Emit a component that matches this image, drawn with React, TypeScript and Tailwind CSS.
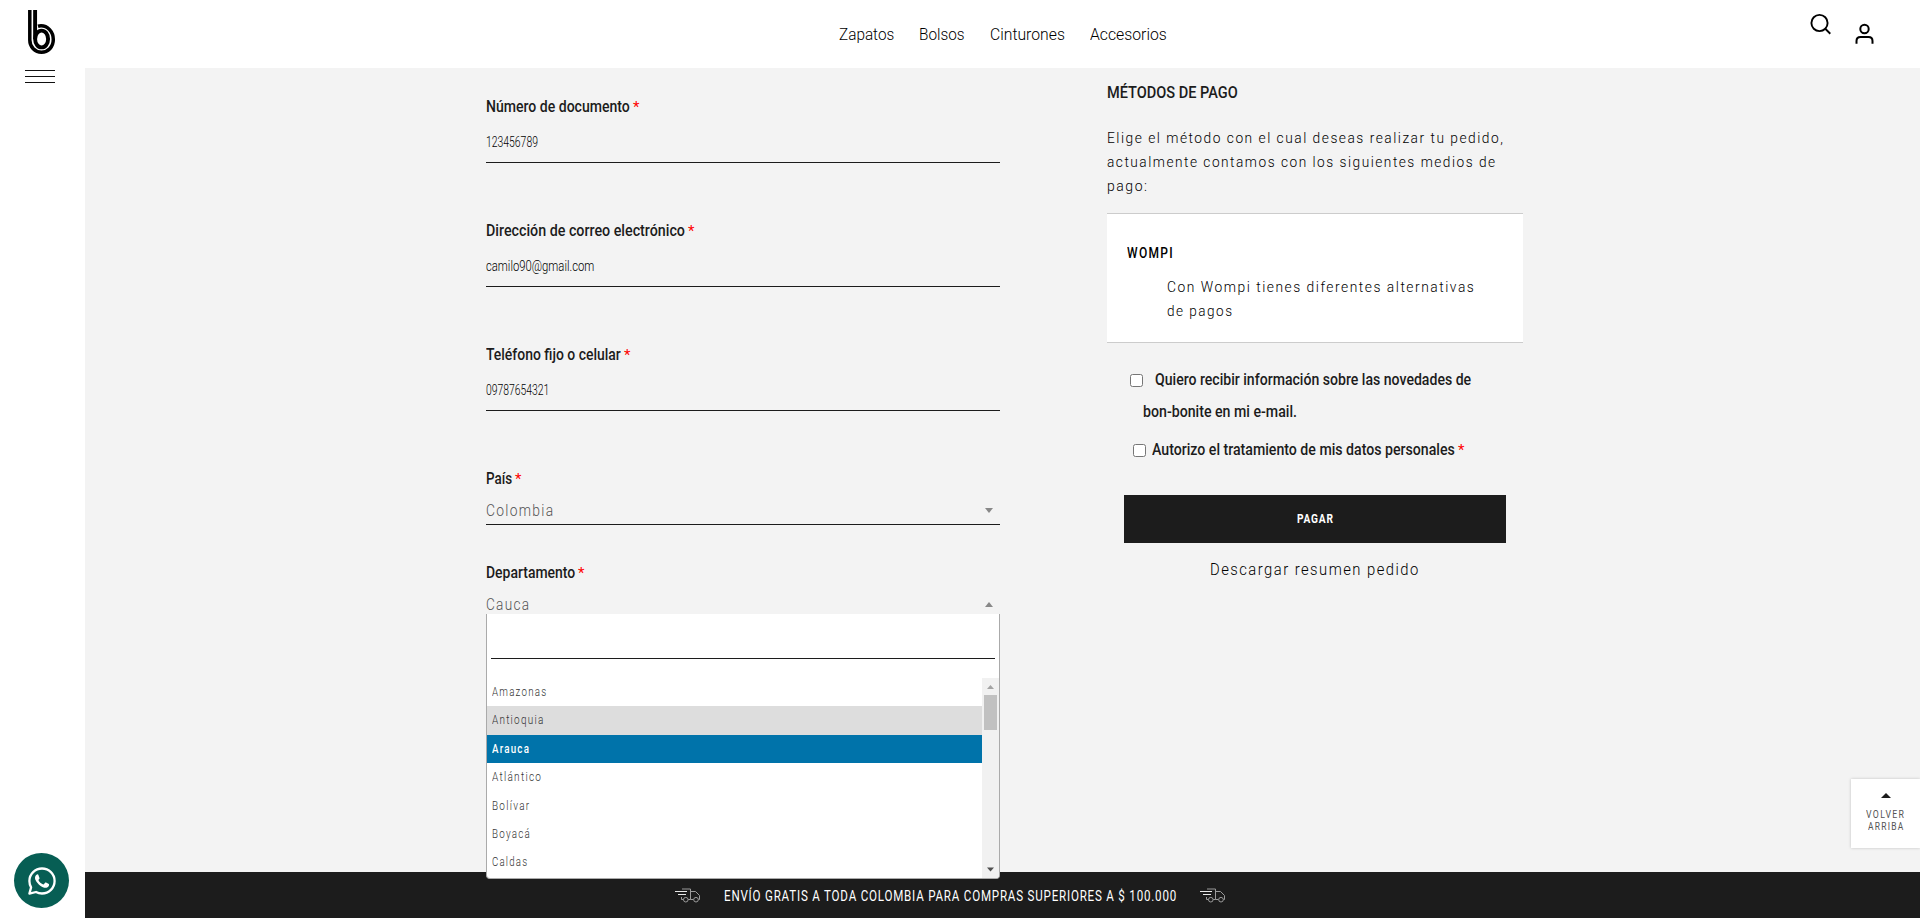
import { useLayoutEffect, useRef, useState } from "react";
import type { ReactNode } from "react";

/** One line of text condensed horizontally to the width its class gives it. */
function Fit({ className, children }: { className: string; children: ReactNode }) {
  const outer = useRef<HTMLSpanElement>(null);
  const inner = useRef<HTMLSpanElement>(null);
  const [scale, setScale] = useState(1);
  useLayoutEffect(() => {
    if (!outer.current || !inner.current) return;
    const spacing = parseFloat(getComputedStyle(inner.current).letterSpacing) || 0;
    const natural = inner.current.offsetWidth - spacing;
    if (natural > 0) setScale(outer.current.offsetWidth / natural);
  }, []);
  return (
    <span ref={outer} className={`block shrink-0 whitespace-nowrap ${className}`}>
      <span ref={inner} className="inline-block origin-left align-top" style={{ transform: `scaleX(${scale})` }}>
        {children}
      </span>
    </span>
  );
}

function Label({ w, children }: { w: string; children: ReactNode }) {
  return (
    <div className="flex h-5 gap-[3px] text-[16px] font-medium leading-5">
      <Fit className={w}>{children}</Fit>
      <span className="text-[15px] font-normal text-[#ff0000]">*</span>
    </div>
  );
}

function Field({ label, lw, value, vw }: { label: string; lw: string; value: string; vw: string }) {
  return (
    <div className="mb-[58px]">
      <Label w={lw}>{label}</Label>
      <div className="h-[46px] border-b border-[#1c1c1c] pt-[15px] text-[14px] font-light leading-5 text-black">
        <Fit className={vw}>{value}</Fit>
      </div>
    </div>
  );
}

function Truck() {
  return (
    <svg className="h-[15px] w-[26px]" viewBox="0 0 26 15" fill="none" stroke="#9a9a9a" strokeWidth="1">
      <path d="M7 1H15.5V11.5H13.2M6.5 9V11.5H8.4M15.500 3.500H20.500L24.500 7.500V11.500H23.600M15.500 11.500H18.400" />
      <circle cx="10.8" cy="11.7" r="2.300" />
      <circle cx="21" cy="11.7" r="2.300" />
      <path d="M0 3.500H12M3 6.500H11" stroke="#e8e8e8" />
    </svg>
  );
}

const options = [
  { name: "Amazonas", w: "w-[54px]", row: "text-[#333]" },
  { name: "Antioquia", w: "w-[51px]", row: "bg-[#ddd] text-[#333]" },
  { name: "Arauca", w: "w-[37px]", row: "bg-[#0073aa] text-white font-medium" },
  { name: "Atlántico", w: "w-[49px]", row: "text-[#333]" },
  { name: "Bolívar", w: "w-[37px]", row: "text-[#333]" },
  { name: "Boyacá", w: "w-[38px]", row: "text-[#333]" },
  { name: "Caldas", w: "w-[35px]", row: "text-[#333]" },
];

function Dropdown() {
  return (
    <div className="absolute left-0 top-[31px] z-10 h-[265px] w-[514px] overflow-hidden rounded-b-[4px] border border-t-0 border-[#aaa] bg-white">
      <div className="mx-1 h-[45px] border-b border-[#1c1c1c]" />
      <div className="mt-[19px] flex h-[200px]">
        <div className="flex-1">
          {options.map((o) => (
            <div key={o.name} className={`h-[28.4px] pl-[5px] text-[12px] leading-[28px] tracking-[1.5px] ${o.row}`}>
              <Fit className={o.w}>{o.name}</Fit>
            </div>
          ))}
        </div>
        <div className="flex w-[17px] flex-col items-center bg-[#f1f1f1]">
          <svg className="h-[17px] w-[17px]" viewBox="0 0 17 17">
            <path d="M5 11L8.5 7L12 11Z" fill="#a3a3a3" />
          </svg>
          <div className="h-[35px] w-[13px] bg-[#c1c1c1]" />
          <div className="flex-1" />
          <svg className="h-[17px] w-[17px]" viewBox="0 0 17 17">
            <path d="M5 6.5H12L8.5 10.5Z" fill="#505050" />
          </svg>
        </div>
      </div>
    </div>
  );
}

export default function App() {
  return (
    <div className="flex h-[918px] w-[1920px] overflow-hidden bg-white font-['Roboto',sans-serif] text-[#1c1c1c]">
      <aside className="flex w-[85px] shrink-0 flex-col">
        <svg className="ml-[27px] mt-[9px] h-[46px] w-[30px]" viewBox="27 9 30 46" fill="none" stroke="#000">
          <path
            d="M29.8 10V40C29.8 47 35 52.3 41.5 52.3C48 52.3 53.3 47 53.3 39.5C53.3 31.5 47.5 25.8 41 25.8C40 25.8 39 25.9 38 26.2"
            strokeWidth="3.5"
          />
          <path d="M35.1 10V39" strokeWidth="3.9" />
          <ellipse cx="41.6" cy="39" rx="6.5" ry="8.4" strokeWidth="3.9" />
        </svg>
        <div className="ml-[25px] mt-[15px] flex w-[30px] flex-col gap-[5px]">
          <div className="h-px bg-[#111]" />
          <div className="h-px bg-[#111]" />
          <div className="h-px bg-[#111]" />
        </div>
        <div className="mb-[10px] ml-[14px] mt-auto flex size-[55px] items-center justify-center rounded-full bg-[#075e54]">
          <svg className="ml-px size-[28px]" viewBox="0 0 28 28" fill="none">
            <path
              d="M1.4 26.6L3.1 20.4C2 18.5 1.4 16.3 1.4 14C1.4 7 7.1 1.5 14 1.5C21 1.5 26.6 7 26.6 14C26.6 21 21 26.5 14 26.5C11.8 26.5 9.8 26 8 25Z"
              stroke="#fff"
              strokeWidth="2.3"
              strokeLinejoin="round"
            />
            <path
              d="M9.8 7.2C9.3 7.2 8.7 7.4 8.2 8C7.6 8.700 7 9.600 7 10.900C7 12.400 8 14 9.500 15.900C11.500 18.400 13.700 20 16.200 20.700C18.200 21.200 20.500 20.200 20.900 18.700C21.100 17.900 21.100 17.400 20.900 17.100C20.500 16.700 18.500 15.700 17.900 15.500C17.500 15.400 17.200 15.500 16.900 15.900L15.800 17.200C15.500 17.500 15.200 17.500 14.800 17.300C12.900 16.500 11.600 15.200 10.600 13.500C10.400 13.100 10.500 12.900 10.700 12.600C11.200 12 11.800 11.500 11.500 10.900L10.400 7.900C10.200 7.400 10.100 7.200 9.800 7.200Z"
              fill="#fff"
            />
          </svg>
        </div>
      </aside>

      <div className="flex flex-1 flex-col">
        <header className="flex h-[68px] shrink-0">
          <nav className="flex gap-[25px] pl-[753.5px] pt-[24px] text-[17px] font-light leading-5 text-black">
            <Fit className="w-[55px]">Zapatos</Fit>
            <Fit className="w-[46px]">Bolsos</Fit>
            <Fit className="w-[75px]">Cinturones</Fit>
            <Fit className="w-[77px]">Accesorios</Fit>
          </nav>
          <div className="ml-auto mr-[46.5px] flex gap-[24px] pt-[13px]">
            <svg className="h-[22px] w-[21px]" viewBox="1809.5 13 21 22" fill="none" stroke="#000" strokeWidth="1.9">
              <circle cx="1819" cy="23" r="8.1" />
              <path d="M1824.8 28.8L1829.8 33.7" />
            </svg>
            <svg className="mt-[10px] h-[22px] w-[19px]" viewBox="1854.5 23 19 22" fill="none" stroke="#000" strokeWidth="2">
              <circle cx="1864" cy="29" r="4.2" />
              <path d="M1856 43.8V41C1856 38.5 1857.5 37 1860 37H1868C1870.5 37 1872 38.5 1872 41V43.8" />
            </svg>
          </div>
        </header>

        <div className="flex h-[804px] shrink-0 bg-[#f3f3f3] pl-[401px]">
          <section className="w-[514px] pt-[29px]">
            <Field label="Número de documento" lw="w-[144px]" value="123456789" vw="w-[52px]" />
            <Field label="Dirección de correo electrónico" lw="w-[199px]" value="camilo90@gmail.com" vw="w-[108px]" />
            <Field label="Teléfono fijo o celular" lw="w-[135px]" value="09787654321" vw="w-[63px]" />
            <Label w="w-[26px]">País</Label>
            <div className="mb-[38px] flex h-[36px] justify-between border-b border-[#1c1c1c] pr-[7px] pt-[12px] text-[16px] font-light leading-5 tracking-[1.5px] text-[#555]">
              <Fit className="w-[67px]">Colombia</Fit>
              <svg className="mt-[7px] h-[5px] w-[8px]" viewBox="0 0 8 5">
                <path d="M0 0H8L4 5Z" fill="#888" />
              </svg>
            </div>
            <Label w="w-[89px]">Departamento</Label>
            <div className="relative flex h-[36px] justify-between pr-[7px] pt-[12px] text-[16px] font-light leading-5 tracking-[1.5px] text-[#555]">
              <Fit className="w-[43px]">Cauca</Fit>
              <svg className="mt-[7px] h-[5px] w-[8px]" viewBox="0 0 8 5">
                <path d="M0 5H8L4 0Z" fill="#888" />
              </svg>
              <Dropdown />
            </div>
          </section>

          <section className="ml-[107px] w-[416px] pt-[14px]">
            <h2 className="text-[17px] font-medium leading-5">
              <Fit className="w-[131px]">MÉTODOS DE PAGO</Fit>
            </h2>
            <div className="mt-[24px] text-[15.5px] font-light leading-6 tracking-[1.7px] text-black">
              <Fit className="w-[396px]">Elige el método con el cual deseas realizar tu pedido,</Fit>
              <Fit className="w-[388px]">actualmente contamos con los siguientes medios de</Fit>
              <Fit className="w-[40px]">pago:</Fit>
            </div>
            <div className="mt-[15px] h-[130px] border-y border-[#ccc] bg-white pl-5 pt-[27px] text-[15.5px] font-light leading-6 tracking-[1.7px] text-black">
              <div className="font-medium">
                <Fit className="w-[46px]">WOMPI</Fit>
              </div>
              <div className="ml-[39.5px] mt-[10px]">
                <Fit className="w-[307px]">Con Wompi tienes diferentes alternativas</Fit>
                <Fit className="w-[65px]">de pagos</Fit>
              </div>
            </div>
            <div className="ml-[23px] mt-[21px] text-[16px] font-medium leading-8">
              <div className="flex items-center gap-[12px]">
                <span className="size-[13px] rounded-[2.5px] border border-[#767676] bg-white" />
                <Fit className="w-[316px]">Quiero recibir información sobre las novedades de</Fit>
              </div>
              <div className="ml-[13px]">
                <Fit className="w-[154px]">bon-bonite en mi e-mail.</Fit>
              </div>
              <div className="ml-[3px] mt-[6px] flex h-8 items-center gap-[6px]">
                <span className="size-[13px] rounded-[2.5px] border border-[#767676] bg-white" />
                <Label w="w-[303px]">Autorizo el tratamiento de mis datos personales</Label>
              </div>
            </div>
            <div className="ml-[17px] mt-[29px] flex h-[48px] w-[382px] items-center justify-center bg-[#1c1c1c] text-[13px] font-bold tracking-[1px] text-white">
              <Fit className="mr-px w-[36px]">PAGAR</Fit>
            </div>
            <div className="ml-[103px] mt-[16px] text-[17px] font-light leading-5 tracking-[1.7px] text-black">
              <Fit className="w-[208px]">Descargar resumen pedido</Fit>
            </div>
          </section>

          <aside className="ml-auto mt-[711px] flex h-[69px] w-[69px] flex-col items-center bg-white pt-[14px] text-[10px] leading-3 tracking-[1.5px] text-[#555] shadow-[0_0_3px_rgba(0,0,0,0.2)]">
            <svg className="mb-[11px] h-[5px] w-[10px]" viewBox="0 0 10 5">
              <path d="M0 5H10L5 0Z" fill="#1c1c1c" />
            </svg>
            <Fit className="mr-px w-[38px]">VOLVER</Fit>
            <Fit className="mr-px w-[35px]">ARRIBA</Fit>
          </aside>
        </div>

        <footer className="flex h-[46px] shrink-0 bg-[#1c1c1c] pl-[590px] pt-[15px] text-[14.5px] leading-5 tracking-[1px] text-white">
          <div className="pt-px">
            <Truck />
          </div>
          <Fit className="ml-[22.5px] mr-[24.5px] w-[452px]">ENVÍO GRATIS A TODA COLOMBIA PARA COMPRAS SUPERIORES A $ 100.000</Fit>
          <div className="pt-px">
            <Truck />
          </div>
        </footer>
      </div>
    </div>
  );
}
